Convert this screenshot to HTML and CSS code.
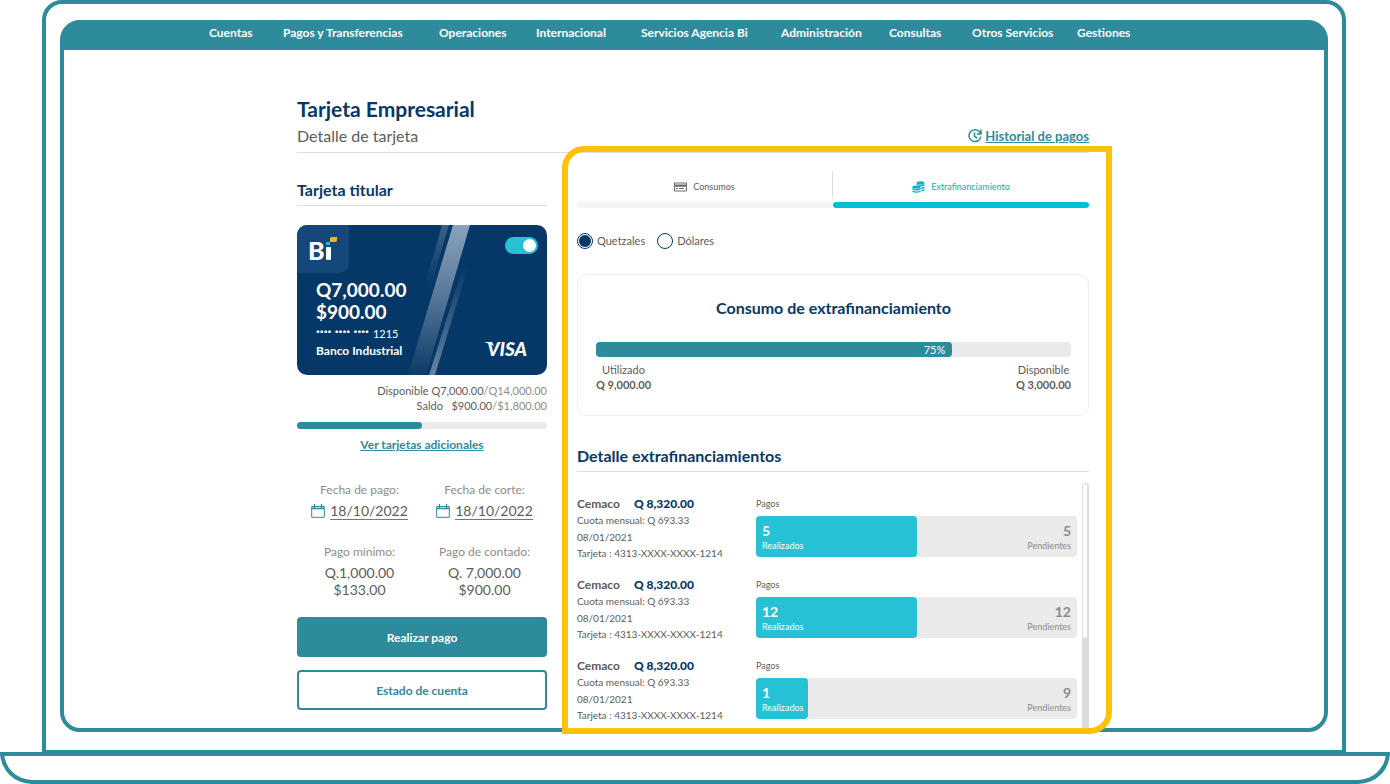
FILE: index.html
```html
<!DOCTYPE html>
<html lang="es">
<head>
<meta charset="utf-8">
<meta name="viewport" content="width=device-width, initial-scale=1">
<title>Tarjeta Empresarial</title>
<link rel="stylesheet" href="styles.css">
</head>
<body>
<div class="lid">
  <div class="screen">
    <nav class="nav" aria-label="Principal">
      <div class="nav-links">
        <a href="#">Cuentas</a>
        <a href="#">Pagos y Transferencias</a>
        <a href="#">Operaciones</a>
        <a href="#">Internacional</a>
        <a href="#">Servicios Agencia Bi</a>
        <a href="#">Administración</a>
        <a href="#">Consultas</a>
        <a href="#">Otros Servicios</a>
        <a href="#">Gestiones</a>
      </div>
    </nav>
    <main class="main">
      <header class="header">
        <h1>Tarjeta Empresarial</h1>
        <div class="subhead">
          <p>Detalle de tarjeta</p>
          <a class="history" href="#">
            <svg width="14" height="14" viewBox="0 0 14 14" fill="none" stroke="currentColor" stroke-width="1.5" aria-hidden="true"><path d="M10.800 2.200A5.900 5.900 0 1 0 12.800 7.600M13 .6V5H8.800M13 5 10.800 2.200M6.500 3.600V7.400L9.200 9"/></svg>
            <span>Historial de pagos</span>
          </a>
        </div>
      </header>
      <div class="columns">
        <section class="summary">
          <h2>Tarjeta titular</h2>
          <div class="card">
            <svg class="card-art" viewBox="0 0 250 150" preserveAspectRatio="none" aria-hidden="true">
              <defs>
                <linearGradient id="g1" x1="0" y1="0" x2="0" y2="1"><stop offset="0" stop-color="#8aa2ba"/><stop offset=".45" stop-color="#5a7a9b"/><stop offset="1" stop-color="#0b3b69"/></linearGradient>
                <linearGradient id="g2" x1="0" y1="0" x2="0" y2="1"><stop offset="0" stop-color="#3d6188"/><stop offset="1" stop-color="#063867"/></linearGradient>
                <linearGradient id="g3" x1="0" y1="0" x2="0" y2="1"><stop offset="0" stop-color="#063867"/><stop offset="1" stop-color="#6583a1"/></linearGradient>
              </defs>
              <path fill="url(#g2)" d="M145 0h7l-18 60h-6z"/>
              <path fill="url(#g1)" d="M156 0h17L129 150h-18z"/>
              <path fill="url(#g3)" d="M166 42h5L138 150h-6z"/>
            </svg>
            <div class="card-top">
              <div class="card-logo">
                <svg width="31" height="32" viewBox="0 0 31 32" role="img" aria-label="Bi">
                  <text class="logo-text" x="0" y="25">B</text>
                  <rect x="18" y="12" width="5" height="13" rx="1" fill="#fff"/>
                  <rect x="18" y="7" width="4" height="3" fill="#2bb9cf"/>
                  <path d="M22 4q0-2 2-2h5v3q0 2-2 2h-5z" fill="#f8b615"/>
                </svg>
              </div>
              <input class="toggle" type="checkbox" checked aria-label="Tarjeta activa">
            </div>
            <div class="card-body">
              <div>
                <p class="amount">Q7,000.00</p>
                <p class="amount">$900.00</p>
                <p class="number"><span class="dots">···· ···· ····</span>1215</p>
                <p class="bank">Banco Industrial</p>
              </div>
              <svg class="visa" width="50" height="24" viewBox="0 0 50 24" role="img" aria-label="VISA"><path d="M2 7h7l2 4Q7 8 2 7.500z" fill="#fff"/><text class="visa-text" x="4" y="21">VISA</text></svg>
            </div>
          </div>
          <div class="balances">
            <p>Disponible Q7,000.00<span>/Q14,000.00</span></p>
            <p>Saldo &nbsp; $900.00<span>/$1,800.00</span></p>
          </div>
          <div class="meter"><div class="meter-fill" style="width:50%"></div></div>
          <a class="more" href="#">Ver tarjetas adicionales</a>
          <dl class="facts">
            <div>
              <dt>Fecha de pago:</dt>
              <dd class="date"><svg width="14" height="14" viewBox="0 0 14 14" fill="none" stroke="currentColor" aria-hidden="true"><path d="M.7 2.500h12.600v10.800H.7z"/><path d="M.7 4.500h12.600M3.500 0v4M10.500 0v4" stroke-width="1.300"/></svg><span>18/10/2022</span></dd>
            </div>
            <div>
              <dt>Fecha de corte:</dt>
              <dd class="date"><svg width="14" height="14" viewBox="0 0 14 14" fill="none" stroke="currentColor" aria-hidden="true"><path d="M.7 2.500h12.600v10.800H.7z"/><path d="M.7 4.500h12.600M3.500 0v4M10.500 0v4" stroke-width="1.300"/></svg><span>18/10/2022</span></dd>
            </div>
            <div>
              <dt>Pago mínimo:</dt>
              <dd>Q.1,000.00<br>$133.00</dd>
            </div>
            <div>
              <dt>Pago de contado:</dt>
              <dd>Q. 7,000.00<br>$900.00</dd>
            </div>
          </dl>
          <div class="actions">
            <button class="btn btn-primary" type="button">Realizar pago</button>
            <button class="btn" type="button">Estado de cuenta</button>
          </div>
        </section>
        <section class="detail">
          <div class="tabs" role="tablist">
            <button class="tab" type="button" role="tab" aria-selected="false">
              <span><svg width="13" height="10" viewBox="0 0 13 10" aria-hidden="true"><path fill="none" stroke="#6a6a6a" d="M.5 1h12v8H.5z"/><path fill="#6a6a6a" d="M1 2.500h11v2.300H1zM2 6h2v1H2zM5 6h5v1H5z"/></svg>Consumos</span>
            </button>
            <button class="tab tab-active" type="button" role="tab" aria-selected="true">
              <span><svg width="13" height="12" viewBox="0 0 13 12" fill="currentColor" aria-hidden="true"><ellipse cx="8.500" cy="1.800" rx="4" ry="1.600"/><path d="M4.500 2.800q4 2 8 0v1.500q-1 1-3.500 1.100Q7 4 4.500 3.900zM9.500 6.200q2-.1 3-.8v1.500q-1 1-3 1.100zM9.500 8.800q2-.1 3-.8v1.300q-1 1-3 1.100z"/><ellipse cx="4.500" cy="5.900" rx="4.200" ry="1.500"/><path d="M.3 7q4.200 2 8.400 0v1.400q-4.200 2-8.400 0zM.3 9.400q4.200 2 8.400 0v1.400q-4.200 2-8.400 0z"/></svg>Extrafinanciamiento</span>
            </button>
          </div>
          <div class="currency">
            <label><input type="radio" name="moneda" checked>Quetzales</label>
            <label><input type="radio" name="moneda">Dólares</label>
          </div>
          <div class="usage">
            <h3>Consumo de extrafinanciamiento</h3>
            <div class="usage-bar"><div class="usage-fill" style="width:75%">75%</div></div>
            <div class="usage-legend">
              <p>Utilizado<strong>Q 9,000.00</strong></p>
              <p>Disponible<strong>Q 3,000.00</strong></p>
            </div>
          </div>
          <h2 class="list-title">Detalle extrafinanciamientos</h2>
          <div class="list-area">
            <ul class="list">
              <li class="item">
                <div class="info">
                  <p class="shop">Cemaco<strong>Q 8,320.00</strong></p>
                  <p>Cuota mensual: Q 693.33</p>
                  <p class="day">08/01/2021</p>
                  <p>Tarjeta : 4313-XXXX-XXXX-1214</p>
                </div>
                <div>
                  <p class="caption">Pagos</p>
                  <div class="pay"><div class="done" style="width:50%"><b>5</b>Realizados</div><div class="left"><b>5</b>Pendientes</div></div>
                </div>
              </li>
              <li class="item">
                <div class="info">
                  <p class="shop">Cemaco<strong>Q 8,320.00</strong></p>
                  <p>Cuota mensual: Q 693.33</p>
                  <p class="day">08/01/2021</p>
                  <p>Tarjeta : 4313-XXXX-XXXX-1214</p>
                </div>
                <div>
                  <p class="caption">Pagos</p>
                  <div class="pay"><div class="done" style="width:50%"><b>12</b>Realizados</div><div class="left"><b>12</b>Pendientes</div></div>
                </div>
              </li>
              <li class="item">
                <div class="info">
                  <p class="shop">Cemaco<strong>Q 8,320.00</strong></p>
                  <p>Cuota mensual: Q 693.33</p>
                  <p class="day">08/01/2021</p>
                  <p>Tarjeta : 4313-XXXX-XXXX-1214</p>
                </div>
                <div>
                  <p class="caption">Pagos</p>
                  <div class="pay"><div class="done" style="width:10%"><b>1</b>Realizados</div><div class="left"><b>9</b>Pendientes</div></div>
                </div>
              </li>
            </ul>
            <div class="scroll" aria-hidden="true"><div class="thumb"></div></div>
          </div>
        </section>
      </div>
    </main>
  </div>
</div>
<div class="base"></div>
</body>
</html>
```
FILE: styles.css
```css
:root {
  --teal: #2d8b9c;
  --cyan: #26c1d4;
  --navy: #063867;
  --gray: #5c5c5c;
  --soft: #8c8c8c;
  --track: #eaeaea;
  --rule: #dedede;
}

* { box-sizing: border-box; }

body, h1, h2, h3, p, ul, dl, dd { margin: 0; }

body {
  background: #fff;
  color: var(--gray);
  font: 11px/16px Lato, "Open Sans", sans-serif;
}

button, input { font: inherit; color: inherit; margin: 0; }

/* Laptop frame */
.lid {
  margin: 0 44px 0 42px;
  padding: 16px 14px 18px;
  border: 4px solid var(--teal);
  border-radius: 20px 20px 0 0;
}

.screen {
  border: 4px solid var(--teal);
  border-radius: 20px;
}

.base {
  height: 32px;
  margin-top: -2px;
  border: 4px solid var(--teal);
  border-radius: 0 0 32px 32px;
}

/* Navigation */
.nav {
  background: var(--teal);
  border-radius: 12px 12px 0 0;
  padding-bottom: 8px;
}

.nav-links {
  display: grid;
  grid-template-columns: 74fr 156fr 97fr 105fr 140fr 108fr 83fr 105fr 54fr;
  max-width: 970px;
  margin: 0 auto;
  padding-right: 48px;
}

.nav a {
  color: #fff;
  font-size: 12px;
  line-height: 18px;
  font-weight: 700;
  text-decoration: none;
  white-space: nowrap;
}

/* Page */
.main {
  max-width: 794px;
  margin: 0 auto;
  padding: 45px 2px 0 0;
}

.header {
  padding-bottom: 4px;
  border-bottom: 1px solid var(--rule);
}

h1 {
  color: var(--navy);
  font-size: 21px;
  line-height: 28px;
}

.subhead {
  display: flex;
  justify-content: space-between;
  align-items: center;
  margin-top: 1px;
  font-size: 16px;
  line-height: 24px;
}

.history {
  display: flex;
  align-items: center;
  gap: 3px;
  color: var(--teal);
  font-size: 13px;
  font-weight: 700;
  text-decoration: none;
}

.history span { text-decoration: underline; }

.columns {
  display: grid;
  grid-template-columns: 250px minmax(0, 1fr);
  gap: 30px;
}

h2 {
  padding-bottom: 3px;
  border-bottom: 1px solid var(--rule);
  color: var(--navy);
  font-size: 16px;
  line-height: 24px;
}

.summary {
  display: flex;
  flex-direction: column;
  padding-top: 25px;
}

/* Bank card */
.card {
  position: relative;
  margin-top: 19px;
  height: 150px;
  border-radius: 10px;
  overflow: hidden;
  background: var(--navy);
  color: #fff;
}

.card-art {
  position: absolute;
  inset: 0;
  width: 100%;
  height: 100%;
}

.card-top {
  position: relative;
  display: flex;
  justify-content: space-between;
  align-items: flex-start;
}

.card-logo {
  width: 52px;
  height: 48px;
  padding: 10px 0 0 11px;
  border-radius: 0 0 10px 0;
  background: #15487a;
}

.logo-text { font: 900 25px Lato, sans-serif; fill: #fff; }
.visa-text { font: italic 900 19px Lato, sans-serif; fill: #fff; }

.toggle {
  appearance: none;
  display: flex;
  justify-content: flex-end;
  width: 33px;
  height: 17px;
  margin: 12px 9px 0 0;
  padding: 2px;
  border-radius: 9px;
  background: var(--cyan);
}

.toggle::before {
  content: "";
  width: 13px;
  height: 13px;
  border-radius: 50%;
  background: #fff;
}

.toggle:not(:checked) {
  justify-content: flex-start;
  background: #8aa2ba;
}

.card-body {
  position: relative;
  display: flex;
  justify-content: space-between;
  align-items: flex-end;
  padding: 6px 14px 0 19px;
}

.amount {
  font-size: 19px;
  line-height: 22px;
  font-weight: 700;
}

.number {
  display: flex;
  gap: 4px;
  margin-top: 3px;
  line-height: 16px;
}

.dots {
  line-height: 10px;
  font-weight: 700;
  font-size: 14px;
}

.bank {
  margin-top: 1px;
  font-size: 12px;
  font-weight: 700;
}

/* Balances */
.balances {
  margin-top: 8px;
  text-align: right;
  line-height: 15px;
}

.balances span { color: var(--soft); }

.meter {
  margin-top: 9px;
  border-radius: 4px;
  background: var(--track);
}

.meter-fill {
  height: 7px;
  border-radius: 4px;
  background: var(--teal);
}

.more {
  align-self: center;
  margin-top: 8px;
  color: var(--teal);
  font-size: 12px;
  font-weight: 700;
}

.facts {
  display: grid;
  grid-template-columns: 1fr 1fr;
  row-gap: 24px;
  margin-top: 29px;
  text-align: center;
  font-size: 14px;
}

.facts dt {
  margin-bottom: 4px;
  color: var(--soft);
  font-size: 12px;
}

.facts dd { line-height: 17px; }

.date {
  display: flex;
  justify-content: center;
  align-items: center;
  gap: 5px;
}

.date svg { color: var(--teal); }

.date span {
  border-bottom: 1px solid #777;
}

.actions {
  display: grid;
  gap: 13px;
  margin-top: 19px;
}

.btn {
  height: 40px;
  padding: 2px 0 0;
  border: 2px solid var(--teal);
  border-radius: 4px;
  background: #fff;
  color: var(--teal);
  font-size: 12px;
  font-weight: 700;
}

.btn-primary {
  background: var(--teal);
  color: #fff;
}

/* Highlighted detail panel */
.detail {
  position: relative;
  padding-top: 18px;
}

.detail::after {
  content: "";
  position: absolute;
  inset: -7px -23px -6px -15px;
  border: 6px solid #ffc107;
  border-radius: 22px 0 22px 0;
  pointer-events: none;
}

.tabs {
  display: grid;
  grid-template-columns: 1fr 1fr;
}

.tab {
  padding: 0;
  border: 0;
  background: none;
  font-size: 9px;
}

.tab span {
  display: flex;
  justify-content: center;
  align-items: center;
  gap: 6px;
  height: 27px;
  padding-top: 5px;
  border-right: 1px solid var(--rule);
}

.tab::after {
  content: "";
  display: block;
  height: 6px;
  margin-top: 4px;
  border-radius: 3px;
  background: #f5f5f5;
}

.tab-active { color: #00b4c9; }
.tab-active span { border: 0; }
.tab-active::after { background: #00c1d3; }

.currency {
  display: flex;
  gap: 12px;
  margin-top: 25px;
}

.currency label {
  display: flex;
  align-items: center;
  gap: 4px;
}

.currency input {
  appearance: none;
  width: 16px;
  height: 16px;
  border: 1px solid var(--navy);
  border-radius: 50%;
}

.currency input:checked {
  background: var(--navy);
  background-clip: content-box;
  padding: 1px;
}

.usage {
  margin-top: 25px;
  padding: 21px 17px 23px 18px;
  border: 1px solid #efefef;
  border-radius: 10px;
}

h3 {
  color: var(--navy);
  font-size: 16px;
  line-height: 24px;
  text-align: center;
}

.usage-bar {
  margin-top: 22px;
  border-radius: 4px;
  background: var(--track);
}

.usage-fill {
  padding-right: 7px;
  border-radius: 4px;
  background: var(--teal);
  color: #fff;
  text-align: right;
  line-height: 15px;
}

.usage-legend {
  display: flex;
  justify-content: space-between;
  margin-top: 5px;
  text-align: center;
  line-height: 15px;
}

.usage-legend strong { display: block; }

.list-title { margin-top: 28px; }

.list-area {
  display: grid;
  grid-template-columns: minmax(0, 1fr) 7px;
  gap: 5px;
  padding-top: 11px;
}

.list {
  display: grid;
  gap: 16px;
  padding: 13px 0 5px;
  list-style: none;
}

.item {
  display: grid;
  grid-template-columns: 179px minmax(0, 1fr);
}

.info { font-size: 10px; }

.shop {
  display: flex;
  gap: 14px;
  font-size: 12px;
  font-weight: 700;
}

.shop strong { color: var(--navy); }

.info .day { margin-top: 1px; }

.caption { font-size: 9px; }

.pay {
  display: flex;
  justify-content: space-between;
  margin-top: 4px;
  border-radius: 4px;
  background: var(--track);
  font-size: 9px;
  line-height: 14px;
}

.pay b {
  display: block;
  font-size: 14px;
  line-height: 17px;
}

.done, .left { padding: 6px 6px 4px; }

.done {
  min-width: 52px;
  border-radius: 4px;
  background: var(--cyan);
  color: #fff;
}

.left {
  color: var(--soft);
  text-align: right;
}

.scroll {
  padding: 1px 2px 0 1px;
  border-radius: 4px 4px 0 0;
  background: #dcdcdc;
}

.thumb {
  height: 63%;
  border-radius: 3px;
  background: #fff;
}
```
